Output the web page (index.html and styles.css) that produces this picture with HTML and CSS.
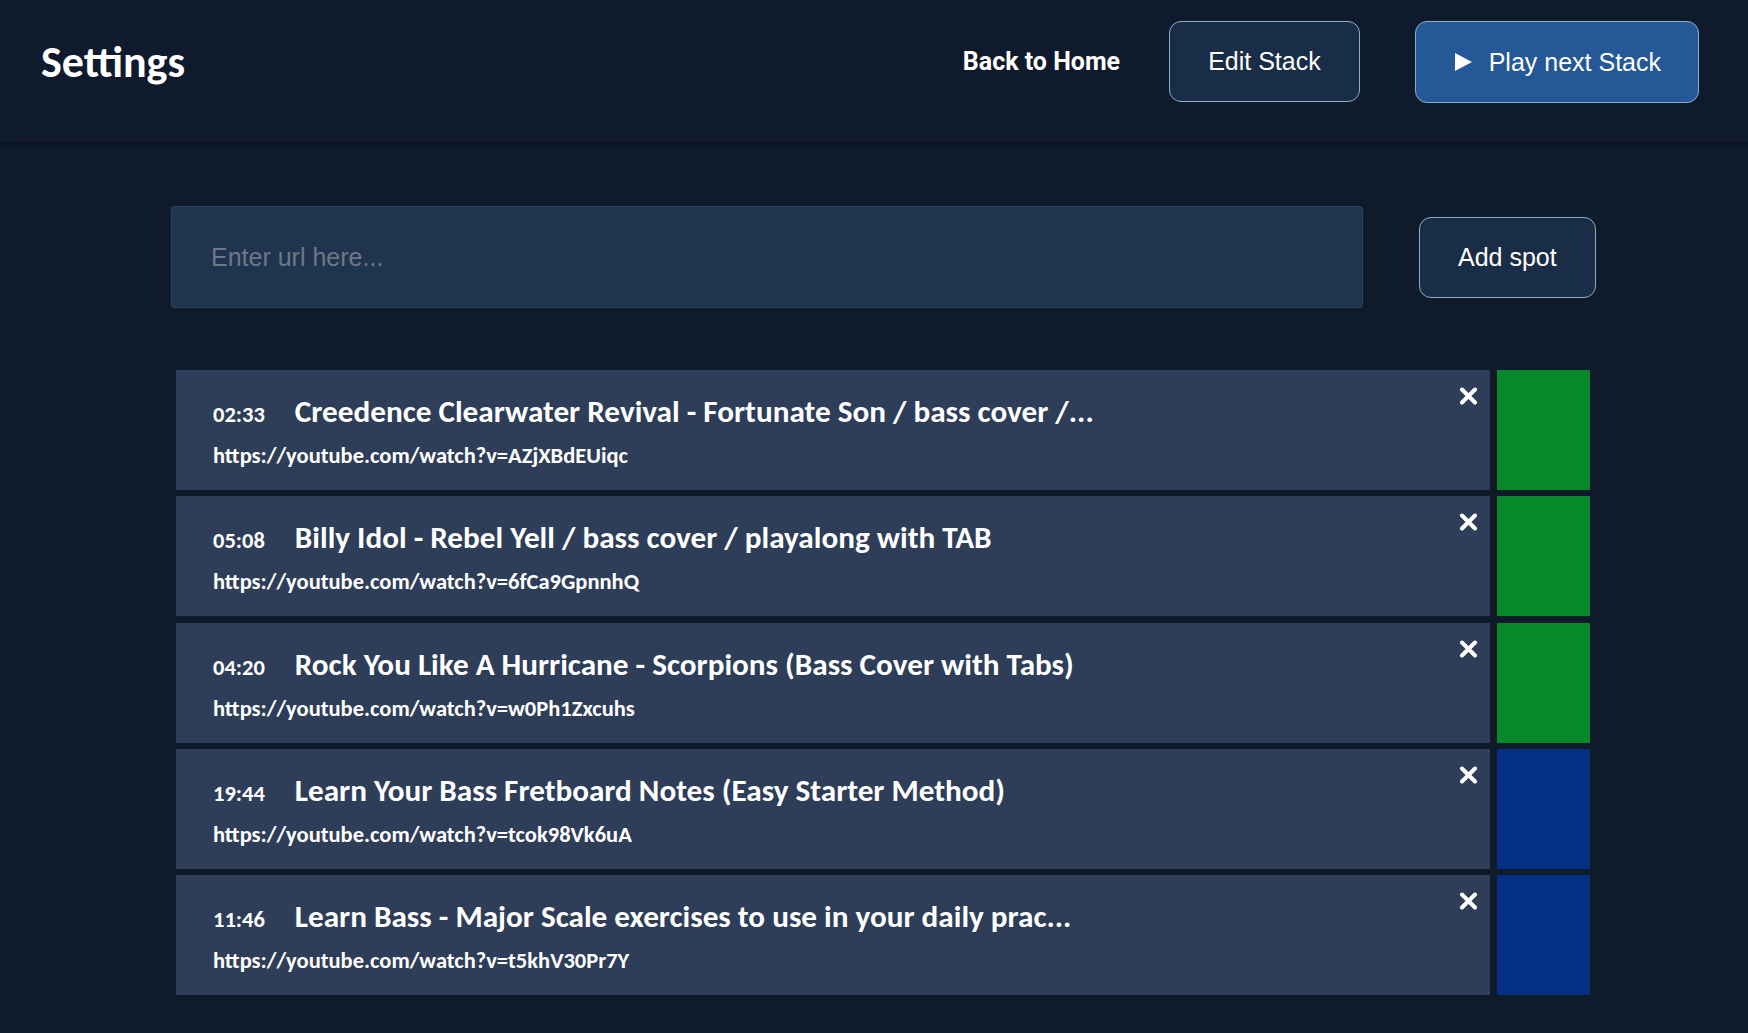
FILE: index.html
```html
<!DOCTYPE html>
<html lang="en">
<head>
<meta charset="utf-8">
<title>Settings</title>
<link rel="stylesheet" href="styles.css">
</head>
<body>
<header class="topbar">
  <h1 class="page-title">Settings</h1>
  <nav class="nav">
    <a class="nav-link" href="#">Back to Home</a>
    <button class="btn" type="button">Edit Stack</button>
    <button class="btn btn-primary" type="button"><svg class="play-icon" viewBox="0 0 17 18" aria-hidden="true"><polygon points="0,0 17,9 0,18"/></svg><span>Play next Stack</span></button>
  </nav>
</header>
<main class="content">
  <form class="add-form">
    <input class="url-input" type="text" placeholder="Enter url here...">
    <button class="btn" type="button">Add spot</button>
  </form>
  <ul class="spot-list">
    <li class="spot">
      <div class="spot-card">
        <div class="spot-head"><span class="spot-time">02:33</span><span class="spot-title">Creedence Clearwater Revival - Fortunate Son / bass cover /...</span></div>
        <div class="spot-url">https://youtube.com/watch?v=AZjXBdEUiqc</div>
        <button class="spot-remove" type="button" aria-label="Remove"><svg viewBox="0 0 19 18"><path d="M3 2.5 L16 15.5 M16 2.5 L3 15.5"/></svg></button>
      </div>
      <div class="spot-status status-done"></div>
    </li>
    <li class="spot">
      <div class="spot-card">
        <div class="spot-head"><span class="spot-time">05:08</span><span class="spot-title">Billy Idol - Rebel Yell / bass cover / playalong with TAB</span></div>
        <div class="spot-url">https://youtube.com/watch?v=6fCa9GpnnhQ</div>
        <button class="spot-remove" type="button" aria-label="Remove"><svg viewBox="0 0 19 18"><path d="M3 2.5 L16 15.5 M16 2.5 L3 15.5"/></svg></button>
      </div>
      <div class="spot-status status-done"></div>
    </li>
    <li class="spot">
      <div class="spot-card">
        <div class="spot-head"><span class="spot-time">04:20</span><span class="spot-title">Rock You Like A Hurricane - Scorpions (Bass Cover with Tabs)</span></div>
        <div class="spot-url">https://youtube.com/watch?v=w0Ph1Zxcuhs</div>
        <button class="spot-remove" type="button" aria-label="Remove"><svg viewBox="0 0 19 18"><path d="M3 2.5 L16 15.5 M16 2.5 L3 15.5"/></svg></button>
      </div>
      <div class="spot-status status-done"></div>
    </li>
    <li class="spot">
      <div class="spot-card">
        <div class="spot-head"><span class="spot-time">19:44</span><span class="spot-title">Learn Your Bass Fretboard Notes (Easy Starter Method)</span></div>
        <div class="spot-url">https://youtube.com/watch?v=tcok98Vk6uA</div>
        <button class="spot-remove" type="button" aria-label="Remove"><svg viewBox="0 0 19 18"><path d="M3 2.5 L16 15.5 M16 2.5 L3 15.5"/></svg></button>
      </div>
      <div class="spot-status status-todo"></div>
    </li>
    <li class="spot">
      <div class="spot-card">
        <div class="spot-head"><span class="spot-time">11:46</span><span class="spot-title">Learn Bass - Major Scale exercises to use in your daily prac...</span></div>
        <div class="spot-url">https://youtube.com/watch?v=t5khV30Pr7Y</div>
        <button class="spot-remove" type="button" aria-label="Remove"><svg viewBox="0 0 19 18"><path d="M3 2.5 L16 15.5 M16 2.5 L3 15.5"/></svg></button>
      </div>
      <div class="spot-status status-todo"></div>
    </li>
  </ul>
</main>
</body>
</html>
```
FILE: styles.css
```css
html, body {
  margin: 0;
  padding: 0;
}

body {
  background: #0f1b2b;
  color: #ffffff;
  font-family: Carlito, Calibri, Lato, sans-serif;
}

.topbar {
  position: relative;
  z-index: 1;
  box-sizing: border-box;
  height: 142px;
  display: flex;
  align-items: center;
  justify-content: space-between;
  padding: 0 49px 19px 41px;
  background: #0f1b2d;
  box-shadow: 0 2px 6px rgba(0, 0, 0, 0.45);
}

.page-title {
  margin: 0;
  font-family: Carlito, Calibri, Lato, sans-serif;
  font-weight: bold;
  font-size: 44px;
  line-height: 1;
  color: #ffffff;
}

.nav {
  display: flex;
  align-items: center;
}

.nav-link {
  margin-right: 49px;
  font-family: Roboto, "Liberation Sans", sans-serif;
  font-weight: bold;
  font-size: 25px;
  color: #ffffff;
  text-decoration: none;
}

.btn {
  box-sizing: border-box;
  padding: 25px 38px;
  font-family: "Liberation Sans", Arial, sans-serif;
  font-size: 25px;
  line-height: 29px;
  color: #ffffff;
  background: #1a2d47;
  border: 1px solid #8cafc3;
  border-radius: 12px;
}

.btn-primary {
  display: inline-flex;
  align-items: center;
  gap: 17px;
  margin-left: 55px;
  padding: 26px 37px 25px 39px;
  background: #245896;
}

.play-icon {
  width: 17px;
  height: 18px;
  fill: #ffffff;
}

.content {
  padding: 64px 0 40px 171px;
}

.add-form {
  display: flex;
  align-items: center;
  gap: 56px;
}

.url-input {
  box-sizing: border-box;
  width: 1192px;
  height: 102px;
  padding: 0 39px;
  font-family: "Liberation Sans", Arial, sans-serif;
  font-size: 25px;
  color: #ffffff;
  background: #1f344f;
  border: 1px solid #2c4262;
  border-radius: 3px;
  outline: none;
}

.url-input::placeholder {
  color: #6d7886;
}

.spot-list {
  list-style: none;
  margin: 62px 0 0 5px;
  padding: 0;
  display: flex;
  flex-direction: column;
  gap: 6.25px;
}

.spot {
  display: flex;
  gap: 7px;
  height: 120px;
}

.spot-card {
  position: relative;
  box-sizing: border-box;
  width: 1314px;
  padding: 23px 37px 0 37px;
  background: #2e3e59;
}

.spot-head {
  display: flex;
  align-items: baseline;
  gap: 30px;
  line-height: 36px;
}

.spot-time {
  font-weight: bold;
  font-size: 22.5px;
}

.spot-title {
  font-weight: bold;
  font-size: 31.2px;
}

.spot-url {
  margin-top: 8px;
  font-weight: bold;
  font-size: 22.5px;
  line-height: 30px;
}

.spot-remove {
  position: absolute;
  top: 17px;
  right: 12px;
  width: 19px;
  height: 18px;
  padding: 0;
  border: 0;
  background: none;
  cursor: pointer;
}

.spot-remove svg {
  display: block;
  width: 19px;
  height: 18px;
  stroke: #ffffff;
  stroke-width: 4;
  stroke-linecap: round;
  fill: none;
}

.spot-status {
  width: 93px;
}

.status-done {
  background: #06882b;
}

.status-todo {
  background: #033083;
}
```
